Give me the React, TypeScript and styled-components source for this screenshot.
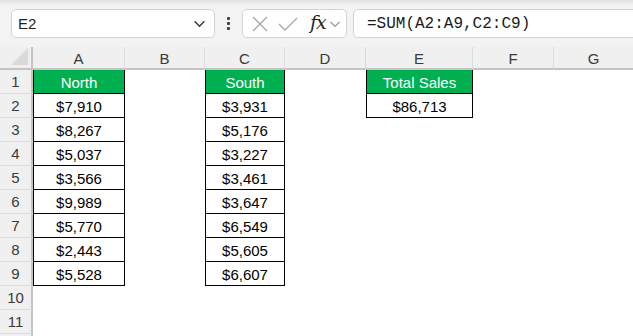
import React from "react";
import { createGlobalStyle, styled } from "styled-components";

const GlobalStyle = createGlobalStyle`
  html, body {
    margin: 0;
    padding: 0;
    background: #ffffff;
    overflow: hidden;
  }
  body {
    font-family: "Liberation Sans", Arial, sans-serif;
    width: 633px;
    height: 336px;
  }
`;

const Shell = styled.div`
  width: 633px;
  height: 336px;
  overflow: hidden;
  display: flex;
  flex-direction: column;
`;

const Toolbar = styled.div`
  height: 47px;
  flex: 0 0 47px;
  box-sizing: border-box;
  padding: 9px 0 0 11px;
  display: flex;
  align-items: flex-start;
  background: linear-gradient(#dedede 0px, #ececec 3px, #f3f3f3 6px, #f3f3f3 100%);
`;

const Box = styled.div<{ $width?: number }>`
  height: 29px;
  box-sizing: border-box;
  background: #ffffff;
  border: 1px solid #d4d4d4;
  border-radius: 5px;
  display: flex;
  align-items: center;
  flex: ${p => (p.$width ? `0 0 ${p.$width}px` : "1 0 auto")};
  width: ${p => (p.$width ? `${p.$width}px` : "auto")};
`;

const NameBox = styled(Box)`
  padding: 0 8px 0 6px;
  justify-content: space-between;
  font-size: 15px;
  color: #1f1f1f;
`;

const Dots = styled.div`
  width: 27px;
  height: 29px;
  display: flex;
  flex-direction: column;
  align-items: center;
  justify-content: center;
  gap: 2px;
  span {
    width: 3px;
    height: 3px;
    background: #404040;
    border-radius: 1px;
  }
`;

const FxBox = styled(Box)`
  padding: 0 0 0 7px;
`;

const FxLabel = styled.span`
  font-family: "DejaVu Serif", "Liberation Serif", serif;
  font-style: italic;
  font-size: 19px;
  color: #222;
  margin: 0 3px 3px 10px;
  letter-spacing: -1px;
`;

const FormulaBox = styled(Box)`
  margin-left: 6px;
  margin-right: -10px;
  padding-left: 13px;
  font-family: "Liberation Mono", "Courier New", monospace;
  font-size: 16px;
  color: #1a1a1a;
`;

const Sheet = styled.div`
  flex: 1 1 auto;
  display: grid;
  grid-template-columns: 33px 92px 80px 80px 81px 107px 81px 80px 1fr;
  grid-template-rows: 23px repeat(12, 24px);
  background: #ffffff;
  overflow: hidden;
`;

const Corner = styled.div`
  background: #f0f0f0;
  border-right: 2px solid #c4c4c4;
  border-bottom: 2px solid #c4c4c4;
  box-sizing: border-box;
  position: relative;
  &::after {
    content: "";
    position: absolute;
    right: 3px;
    bottom: 3px;
    width: 0;
    height: 0;
    border-left: 17px solid transparent;
    border-bottom: 17px solid #dadada;
  }
`;

const ColHead = styled.div`
  background: #f0f0f0;
  border-right: 1px solid #dcdcdc;
  border-bottom: 2px solid #c4c4c4;
  box-sizing: border-box;
  display: flex;
  align-items: center;
  justify-content: center;
  font-size: 15px;
  color: #3a3a3a;
  padding-top: 1px;
`;

const RowHead = styled.div`
  background: #f0f0f0;
  border-right: 2px solid #c4c4c4;
  border-bottom: 1px solid #dcdcdc;
  box-sizing: border-box;
  display: flex;
  align-items: center;
  justify-content: center;
  font-size: 15px;
  color: #3a3a3a;
`;

const Cell = styled.div<{ $boxed?: boolean; $head?: boolean }>`
  box-sizing: border-box;
  display: flex;
  align-items: center;
  justify-content: center;
  font-size: 15px;
  color: ${p => (p.$head ? "#ffffff" : "#000000")};
  background: ${p => (p.$head ? "#00b050" : "#ffffff")};
  border-left: ${p => (p.$boxed ? "1px solid #000" : "none")};
  border-right: ${p => (p.$boxed ? "1px solid #000" : "none")};
  border-bottom: ${p => (p.$boxed ? "1px solid #000" : "none")};
  padding-top: 1px;
  white-space: nowrap;
`;

const cols = ["A", "B", "C", "D", "E", "F", "G", ""];
const north = ["$7,910", "$8,267", "$5,037", "$3,566", "$9,989", "$5,770", "$2,443", "$5,528"];
const south = ["$3,931", "$5,176", "$3,227", "$3,461", "$3,647", "$6,549", "$5,605", "$6,607"];

function Chevron({ color, size }: { color: string; size: number }) {
  return (
    <svg width={size} height={size} viewBox="0 0 12 12">
      <path d="M1.5 4 L6 8.5 L10.5 4" fill="none" stroke={color} strokeWidth="1.2" />
    </svg>
  );
}

function cellFor(row: number, col: number) {
  if (col === 0) {
    if (row === 0) return { text: "North", head: true, boxed: true };
    if (row <= 8) return { text: north[row - 1], boxed: true };
  }
  if (col === 2) {
    if (row === 0) return { text: "South", head: true, boxed: true };
    if (row <= 8) return { text: south[row - 1], boxed: true };
  }
  if (col === 4) {
    if (row === 0) return { text: "Total Sales", head: true, boxed: true };
    if (row === 1) return { text: "$86,713", boxed: true };
  }
  return { text: "" };
}

export default function App() {
  const rows = Array.from({ length: 12 }, (_, i) => i);
  return (
    <Shell>
      <GlobalStyle />
      <Toolbar>
        <NameBox $width={204}>
          <span>E2</span>
          <Chevron color="#333" size={13} />
        </NameBox>
        <Dots>
          <span />
          <span />
          <span />
        </Dots>
        <FxBox $width={105}>
          <svg width="20" height="20" viewBox="0 0 20 20">
            <path d="M3 3 L17 17 M17 3 L3 17" stroke="#a8a8a8" strokeWidth="1.3" fill="none" />
          </svg>
          <svg width="24" height="20" viewBox="0 0 24 20" style={{ marginLeft: 6 }}>
            <path d="M3 10 L9 16 L21 4" stroke="#a8a8a8" strokeWidth="1.3" fill="none" />
          </svg>
          <FxLabel>fx</FxLabel>
          <Chevron color="#9a9a9a" size={12} />
        </FxBox>
        <FormulaBox>=SUM(A2:A9,C2:C9)</FormulaBox>
      </Toolbar>
      <Sheet>
        <Corner />
        {cols.map((c, i) => (
          <ColHead key={i}>{c}</ColHead>
        ))}
        {rows.map(r => (
          <React.Fragment key={r}>
            <RowHead>{r < 11 ? r + 1 : ""}</RowHead>
            {cols.map((_, c) => {
              const info = cellFor(r, c);
              return (
                <Cell key={c} $boxed={info.boxed} $head={info.head}>
                  {info.text}
                </Cell>
              );
            })}
          </React.Fragment>
        ))}
      </Sheet>
    </Shell>
  );
}
